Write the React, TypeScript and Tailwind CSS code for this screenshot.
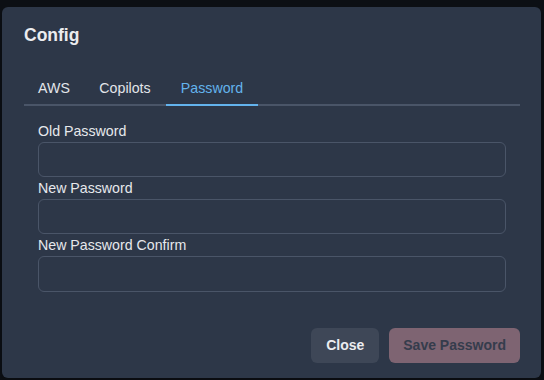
import React from "react";

const font = { fontFamily: '"Liberation Sans", Arial, sans-serif' };

function Field({ label }: { label: string }) {
  return (
    <div className="flex flex-col">
      <label className="block text-[14.2px] leading-[21px] font-medium text-[#e6e8ec]">{label}</label>
      <input
        type="password"
        className="h-[35.5px] w-full rounded-[6px] border border-[#4A5568] bg-transparent px-[15px] text-[14.2px] text-[#e6e8ec] outline-none"
      />
    </div>
  );
}

export default function App() {
  return (
    <div style={font} className="w-[544px] h-[380px] bg-[#0c0f14] pt-[7px] pl-[2px] pr-[3px] pb-[2px] overflow-hidden">
      <div className="w-[539px] h-[371px] rounded-[6px] bg-[#2D3748] flex flex-col shadow-lg">
        <div className="px-[22px] pt-[15px] pb-[14px] text-[17.5px] leading-[26px] font-bold text-[#ebecef]">Config</div>
        <div className="pl-[22px] pr-[21px] pt-[8px]">
          <div className="flex border-b-2 border-[#4A5568]">
            <button className="w-[60px] -mb-[2px] border-b-2 border-transparent pt-[7.5px] pb-[5.5px] text-[14.2px] leading-[21px] text-[#e2e5ea]">AWS</button>
            <button className="w-[82px] -mb-[2px] border-b-2 border-transparent pt-[7.5px] pb-[5.5px] text-[14.2px] leading-[21px] text-[#e2e5ea]">Copilots</button>
            <button className="w-[92px] -mb-[2px] border-b-2 border-[#63B3ED] pt-[7.5px] pb-[5.5px] text-[14.2px] leading-[21px] text-[#63B3ED]">Password</button>
          </div>
          <div className="pl-[14px] pr-[14px] pt-[14.5px] flex flex-col gap-[0.8px]">
            <Field label="Old Password" />
            <Field label="New Password" />
            <Field label="New Password Confirm" />
          </div>
        </div>
        <div className="mt-auto flex justify-end gap-[10px] pr-[21px] pb-[15px]">
          <button className="h-[35px] px-[15px] rounded-[6px] bg-[#3E4757] text-[14px] font-bold text-[#ebecef] flex items-center">Close</button>
          <button className="h-[35px] px-[14px] rounded-[6px] bg-[#7E6472] text-[14px] font-bold text-[#353c4c] flex items-center">Save Password</button>
        </div>
      </div>
    </div>
  );
}
